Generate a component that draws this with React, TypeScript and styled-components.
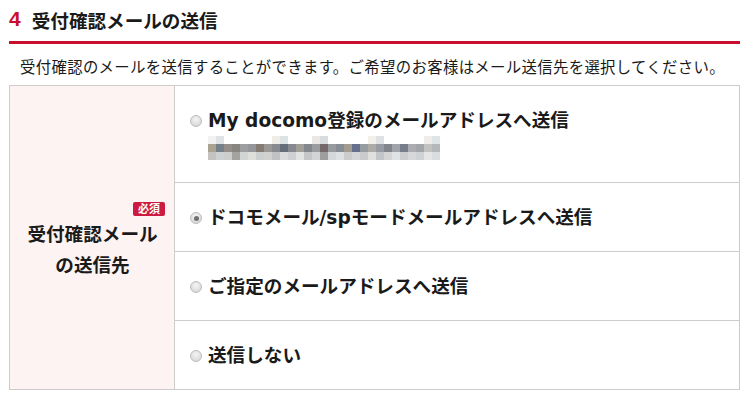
import React from "react";
import styled, { createGlobalStyle } from "styled-components";

const Global = createGlobalStyle`
  html, body { margin: 0; padding: 0; background: #fff; }
  body { font-family: "Noto Sans CJK JP", "Noto Sans", sans-serif; color: #1a1a1a; }
`;

const Page = styled.div`
  width: 731px;
  margin-left: 9px;
`;

const Header = styled.h2`
  display: flex;
  align-items: center;
  gap: 11px;
  margin: 0;
  border-bottom: 3px solid #c8102e;
  box-sizing: border-box;
  height: 44px;
  padding-bottom: 3px;
  font-size: 18.6px;
  font-weight: 700;
  color: #1a1a1a;
`;

const Num = styled.span`
  color: #c8102e;
  font-family: "Liberation Sans", "Noto Sans", sans-serif;
  font-size: 21px;
  font-weight: 700;
`;

const Desc = styled.p`
  margin: 11px 0 8px 11px;
  font-size: 15.4px;
  letter-spacing: 0.33px;
  line-height: 22px;
  color: #1a1a1a;
  white-space: nowrap;
`;

const Table = styled.div`
  display: grid;
  grid-template-columns: 165px 1fr;
  border: 1px solid #cccccc;
`;

const LabelCell = styled.div`
  background: #fdf3f2;
  border-right: 1px solid #cccccc;
  display: flex;
  flex-direction: column;
  justify-content: center;
  padding: 5px 9px 0 10px;
`;

const Badge = styled.span`
  align-self: flex-end;
  display: inline-flex;
  align-items: center;
  justify-content: center;
  width: 32px;
  height: 14px;
  border-radius: 2px;
  background: #cc1a40;
  color: #fff;
  font-size: 11px;
  font-weight: 700;
  line-height: 1;
  margin-bottom: 1px;
`;

const LabelText = styled.div`
  text-align: center;
  font-size: 18.6px;
  font-weight: 700;
  line-height: 31px;
`;

const Options = styled.div`
  display: flex;
  flex-direction: column;
`;

const OptionRow = styled.label<{ $first?: boolean }>`
  display: flex;
  flex-direction: column;
  justify-content: center;
  padding: ${(p) => (p.$first ? "22px 16px 22px 15px" : "22px 16px 20px 15px")};
  border-top: ${(p) => (p.$first ? "none" : "1px solid #cccccc")};
`;

const OptionLine = styled.div`
  display: flex;
  align-items: center;
  gap: 6px;
  font-family: "DejaVu Sans", "Noto Sans CJK JP", sans-serif;
  font-size: 18.6px;
  font-weight: 700;
  line-height: 26px;
  white-space: nowrap;
`;

const Radio = styled.span<{ $checked?: boolean }>`
  flex: none;
  width: 12px;
  height: 12px;
  box-sizing: border-box;
  border-radius: 50%;
  border: 1px solid #bdbdbd;
  background: radial-gradient(circle at 50% 35%, #f4f4f4 0%, #dcdcdc 70%, #cfcfcf 100%);
  display: flex;
  align-items: center;
  justify-content: center;
  &::after {
    content: "";
    display: ${(p) => (p.$checked ? "block" : "none")};
    width: 5px;
    height: 5px;
    border-radius: 50%;
    background: #6f6f6f;
  }
`;

const Mosaic = styled.div`
  display: grid;
  grid-template-columns: repeat(29, 8px);
  grid-auto-rows: 8px;
  margin: 2px 0 0 18px;
  width: 232px;
`;

const Cell = styled.span<{ $c: string }>`
  background: ${(p) => p.$c};
`;

const top = [
  "#f2f2f2", "#dfe3e6", "#ffffff", "#ffffff", "#ffffff", "#ffffff", "#ffffff", "#ffffff", "#f0ece8",
  "#dde2e5", "#ffffff", "#ffffff", "#ffffff", "#ebe7e4", "#d9dbdc", "#ffffff", "#ffffff", "#ffffff",
  "#ffffff", "#ffffff", "#f3efeb", "#dfe2e4", "#ffffff", "#ffffff", "#ffffff", "#ffffff", "#ffffff",
  "#f0ece9", "#dfe4e7",
];
const mid = [
  "#aaa392", "#75808a", "#938e89", "#88847f", "#9c9ea0", "#94969a", "#847b75", "#9a9794", "#878b8e",
  "#666d7a", "#868a90", "#a19f98", "#83888f", "#9a9c9f", "#74686a", "#979a9e", "#878d94", "#a39c92",
  "#66708e", "#979ca1", "#adaba5", "#989ca2", "#82858c", "#a1a4ab", "#777d8b", "#acadb0", "#a3a5a9",
  "#c2c2c1", "#b5b8ba",
];
const bot = [
  "#c4c3bf", "#cdd1d3", "#cccece", "#a5a39f", "#d3d5d5", "#dededc", "#cccfd0", "#d1d1cf", "#c0c2c3",
  "#d9dbdc", "#ced0d1", "#e2e3e3", "#c4c6c7", "#d2d4d5", "#9e9e9e", "#d6d7d8", "#dfe0e1", "#cccccc",
  "#d4d6d8", "#c9cbcd", "#e0e0df", "#c3c6c9", "#d5d5d5", "#e1e2e3", "#cccdcf", "#d7d8d9", "#cfd1d3",
  "#e5e5e5", "#dadcdd",
];

const options = [
  { text: "My docomo登録のメールアドレスへ送信", checked: false, masked: true },
  { text: "ドコモメール/spモードメールアドレスへ送信", checked: true },
  { text: "ご指定のメールアドレスへ送信", checked: false },
  { text: "送信しない", checked: false },
];

export default function App() {
  return (
    <>
      <Global />
      <Page>
        <Header>
          <Num>4</Num>
          <span>受付確認メールの送信</span>
        </Header>
        <Desc>受付確認のメールを送信することができます。ご希望のお客様はメール送信先を選択してください。</Desc>
        <Table>
          <LabelCell>
            <Badge>必須</Badge>
            <LabelText>
              受付確認メール
              <br />
              の送信先
            </LabelText>
          </LabelCell>
          <Options>
            {options.map((o, i) => (
              <OptionRow key={i} $first={i === 0}>
                <OptionLine>
                  <Radio $checked={o.checked} />
                  <span>{o.text}</span>
                </OptionLine>
                {o.masked && (
                  <Mosaic>
                    {[...top, ...mid, ...bot].map((c, j) => (
                      <Cell key={j} $c={c} />
                    ))}
                  </Mosaic>
                )}
              </OptionRow>
            ))}
          </Options>
        </Table>
      </Page>
    </>
  );
}
